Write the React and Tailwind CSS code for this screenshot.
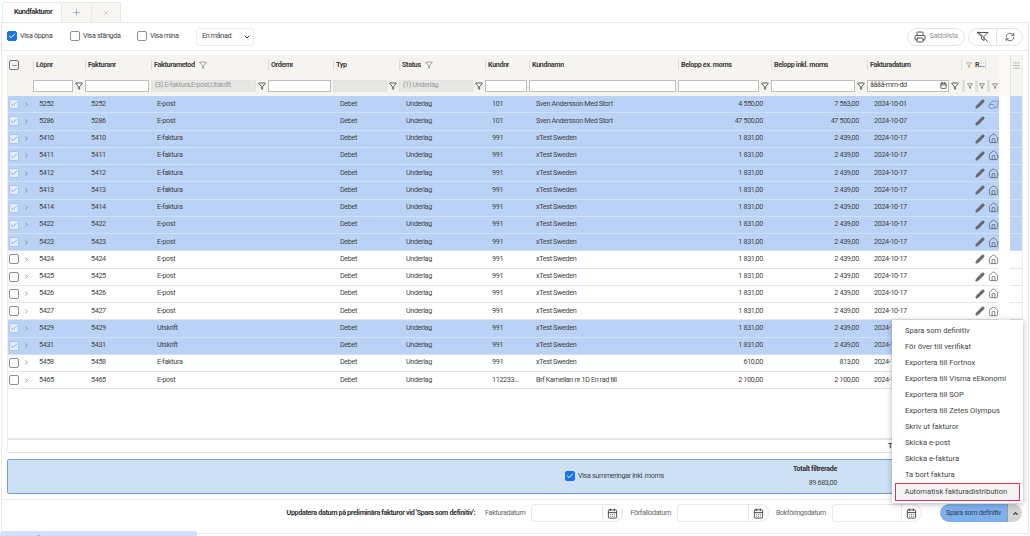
import React from "react";
import { Check, ChevronDown, ChevronRight, ChevronUp, Calendar, CalendarDays, Filter, House, Menu, Minus, Pencil, Plus, Printer, RefreshCw, X } from "lucide-react";

const E = "E-post";
const F = "E-faktura";
const U = "Utskrift";
const sven = "Sven Andersson Med Stort";
const xt = "xTest Sweden";

const rows = [
  [5252, E, "101", sven, "4 550,00", "7 563,00", "2024-10-01", 1, "leaf"],
  [5286, E, "101", sven, "47 500,00", "47 500,00", "2024-10-07", 1, ""],
  [5410, F, "991", xt, "1 831,00", "2 439,00", "2024-10-17", 1, "home"],
  [5411, F, "991", xt, "1 831,00", "2 439,00", "2024-10-17", 1, "home"],
  [5412, F, "991", xt, "1 831,00", "2 439,00", "2024-10-17", 1, "home"],
  [5413, F, "991", xt, "1 831,00", "2 439,00", "2024-10-17", 1, "home"],
  [5414, F, "991", xt, "1 831,00", "2 439,00", "2024-10-17", 1, "home"],
  [5422, E, "991", xt, "1 831,00", "2 439,00", "2024-10-17", 1, "home"],
  [5423, E, "991", xt, "1 831,00", "2 439,00", "2024-10-17", 1, "home"],
  [5424, E, "991", xt, "1 831,00", "2 439,00", "2024-10-17", 0, "home"],
  [5425, E, "991", xt, "1 831,00", "2 439,00", "2024-10-17", 0, "home"],
  [5426, E, "991", xt, "1 831,00", "2 439,00", "2024-10-17", 0, "home"],
  [5427, E, "991", xt, "1 831,00", "2 439,00", "2024-10-17", 0, "home"],
  [5429, U, "991", xt, "1 831,00", "2 439,00", "2024-10-17", 1, "home"],
  [5431, U, "991", xt, "1 831,00", "2 439,00", "2024-10-17", 1, "home"],
  [5458, F, "991", xt, "610,00", "813,00", "2024-10-17", 0, "home"],
  [5465, E, "112233...", "Brf Kamelian nr 1D En rad till", "2 100,00", "2 100,00", "2024-10-17", 0, "home"],
];

const menuItems = [
  "Spara som definitiv",
  "För över till verifikat",
  "Exportera till Fortnox",
  "Exportera till Visma eEkonomi",
  "Exportera till SOP",
  "Exportera till Zetes Olympus",
  "Skriv ut fakturor",
  "Skicka e-post",
  "Skicka e-faktura",
  "Ta bort faktura",
];

const cols = "grid grid-cols-[12px_13px_52px_66px_117px_65px_66px_86px_44px_149px_93px_96px_94px_38px]";

const Box = ({ checked, blue }) => (
  <span
    className={`flex h-[10px] w-[10px] shrink-0 items-center justify-center rounded-[2px] border ${
      blue ? "border-[#1a73e8] bg-[#1a73e8]" : checked ? "border-[#a9c4ec] bg-[#e4eefc]" : "border-[#8f8f8f] bg-white"
    }`}
  >
    {checked || blue ? <Check size={8} strokeWidth={3} className={blue ? "text-white" : "text-[#7fa9e8]"} /> : null}
  </span>
);

const HeadCell = ({ label, filter }) => (
  <div className="flex items-center gap-1 overflow-hidden border-l border-[#dcdad4] pl-[2px] font-bold text-[#3d3d3d]">
    <span className="truncate">{label}</span>
    {filter ? <Filter size={8} className="shrink-0 text-[#777]" /> : null}
  </div>
);

const FilterInput = ({ value, icon, disabled }) => (
  <div className="flex items-center gap-[2px] pr-[2px]">
    <div
      className={`flex h-[12px] min-w-0 flex-1 items-center truncate border px-[3px] ${
        disabled ? "border-[#e2e2e0] bg-[#e6e6e4] text-[#999]" : "border-[#bdbdbd] bg-white text-[#444]"
      }`}
    >
      {value}
    </div>
    {icon ? <Filter size={8} strokeWidth={2.5} className="shrink-0 text-[#444]" /> : null}
  </div>
);

const DateField = ({ label, width }) => (
  <div className="flex items-center gap-[6px]">
    <span className="text-[#666]">{label}</span>
    <div className={`flex h-[18px] items-center justify-end rounded-l-[3px] rounded-r-[9px] border border-[#e8e8e8] bg-white ${width}`}>
      <span className="flex h-full w-[20px] items-center justify-center border-l border-[#e8e8e8]">
        <CalendarDays size={11} className="text-[#444]" />
      </span>
    </div>
  </div>
);

export default function App() {
  return (
    <div className="relative h-[536px] w-[1030px] overflow-hidden bg-white font-['Roboto',sans-serif] text-[7.2px] tracking-[-0.35px] text-[#444]">
      {/* flikar */}
      <div className="flex h-[22px] items-end pl-[2px]">
        <div className="flex h-[20px] w-[60px] items-center rounded-t-[3px] border border-b-0 border-[#e8e8e8] bg-white pl-[11px] font-bold text-[#333]">
          Kundfakturor
        </div>
        <div className="flex h-[20px] w-[29px] items-center justify-center border-t border-[#e8e8e8] bg-[#f7f6f3]">
          <Plus size={9} className="text-[#6d9ad8]" />
        </div>
        <div className="flex h-[20px] w-[30px] items-center justify-center border border-b-0 border-[#e8e8e8] bg-[#f7f6f3]">
          <X size={8} className="text-[#bbb]" />
        </div>
      </div>

      <div className="mx-px flex h-[512px] flex-col border border-[#e8e8e8]">
        {/* verktygsrad */}
        <div className="flex h-[28px] shrink-0 items-center border-b border-[#eeeeee] pl-[5px] pr-[5px]">
          <div className="flex w-[63px] items-center gap-[3px]">
            <Box blue />
            <span>Visa öppna</span>
          </div>
          <div className="flex w-[67px] items-center gap-[3px]">
            <Box />
            <span>Visa stängda</span>
          </div>
          <div className="flex w-[59px] items-center gap-[3px]">
            <Box />
            <span>Visa mina</span>
          </div>
          <div className="flex h-[18px] w-[58px] items-center justify-between rounded-[3px] border border-[#eeeeee] pl-[5px] pr-[2px]">
            <span>En månad</span>
            <ChevronDown size={8} strokeWidth={3} className="text-[#333]" />
          </div>
          <div className="ml-auto flex h-[18px] w-[58px] items-center justify-center gap-[3px] rounded-full border border-[#e5e5e5] text-[#999]">
            <Printer size={12} className="text-[#555]" />
            <span>Saldolista</span>
          </div>
          <div className="ml-[3px] flex h-[18px] items-center rounded-full border border-[#e5e5e5]">
            <span className="flex h-full w-[28px] items-center justify-center border-r border-[#e5e5e5]">
              <svg width="13" height="11" viewBox="0 0 13 11" fill="none" stroke="#555" strokeWidth="1">
                <path d="M1 1.5h11L8 5.5v4L5.5 8V5.5z" />
                <path d="M2 0.5l9.5 10" />
              </svg>
            </span>
            <span className="flex h-full w-[25px] items-center justify-center">
              <RefreshCw size={10} className="text-[#555]" />
            </span>
          </div>
        </div>

        {/* tabell */}
        <div className="mx-[5px] mt-[4px] flex h-[398px] shrink-0 flex-col border-x border-[#eeeeee]">
          <div className="flex h-[41px] shrink-0 bg-[#f6f4f0]">
            <div className="w-[991px]">
              <div className={`${cols} h-[20px] items-center`}>
                <div className="flex justify-center">
                  <span className="flex h-[10px] w-[10px] items-center justify-center rounded-[2px] border border-[#777] bg-[#f6f4f0]">
                    <Minus size={7} className="text-[#555]" />
                  </span>
                </div>
                <div />
                <HeadCell label="Löpnr" />
                <HeadCell label="Fakturanr" />
                <HeadCell label="Fakturametod" filter />
                <HeadCell label="Ordernr" />
                <HeadCell label="Typ" />
                <HeadCell label="Status" filter />
                <HeadCell label="Kundnr" />
                <HeadCell label="Kundnamn" />
                <HeadCell label="Belopp ex. moms" />
                <HeadCell label="Belopp inkl. moms" />
                <HeadCell label="Fakturadatum" />
                <div className="flex items-center gap-[3px] border-l border-[#dcdad4] pl-[4px] font-bold">
                  <Filter size={6} className="text-[#777]" />
                  <span className="w-[11px] border-r border-[#dcdad4]">R...</span>
                </div>
              </div>
              <div className={`${cols} h-[21px] items-center`}>
                <div />
                <div />
                <FilterInput icon />
                <FilterInput />
                <FilterInput value="(3) E-faktura,E-post,Utskrift" icon disabled />
                <FilterInput />
                <FilterInput icon disabled />
                <FilterInput value="(1) Underlag" icon disabled />
                <FilterInput />
                <FilterInput />
                <FilterInput icon />
                <FilterInput icon />
                <div className="flex items-center gap-[2px] pr-[2px]">
                  <div className="flex h-[12px] min-w-0 flex-1 items-center justify-between border border-[#bdbdbd] bg-white pl-[2px] pr-[1px] text-[#444]">
                    <span>åååå-mm-dd</span>
                    <Calendar size={7} strokeWidth={2.5} className="text-[#333]" />
                  </div>
                  <Filter size={8} strokeWidth={2.5} className="shrink-0 text-[#444]" />
                </div>
                <div className="flex items-center justify-around text-[#555]">
                  <span className="h-[12px] w-[3px] bg-[#e0e0de]" />
                  <Filter size={6} strokeWidth={2.5} />
                  <span className="h-[12px] w-[3px] bg-[#e0e0de]" />
                  <Filter size={6} strokeWidth={2.5} />
                  <span className="h-[12px] w-[3px] bg-[#e0e0de]" />
                  <Filter size={6} strokeWidth={2.5} />
                </div>
              </div>
            </div>
            <div className="w-[11px] shrink-0 bg-[#f9f8f5]" />
            <div className="flex flex-1 items-start justify-center border-l border-[#e4e4e4] pt-[6px]">
              <Menu size={9} className="text-[#aaa]" />
            </div>
          </div>

          <div className="flex min-h-0 flex-1 flex-col">
            {rows.map((r) => (
              <div key={r[0]} className="flex h-[17.25px] shrink-0">
                <div className={`${cols} w-[991px] items-center border-b ${r[7] ? "border-[#d0e0f8] bg-[#b9d2f6]" : "border-[#e6e6e6] bg-white"}`}>
                  <div className="flex justify-center">
                    <Box checked={!!r[7]} />
                  </div>
                  <div className="flex justify-center">
                    <ChevronRight size={7} className="text-[#666]" />
                  </div>
                  <div className="pl-[6px]">{r[0]}</div>
                  <div className="pl-[6px]">{r[0]}</div>
                  <div className="pl-[6px]">{r[1]}</div>
                  <div />
                  <div className="pl-[7px]">Debet</div>
                  <div className="pl-[7px]">Underlag</div>
                  <div className="pl-[7px]">{r[2]}</div>
                  <div className="pl-[7px]">{r[3]}</div>
                  <div className="pr-[8px] text-right">{r[4]}</div>
                  <div className="pr-[8px] text-right">{r[5]}</div>
                  <div className="pl-[7px]">{r[6]}</div>
                  <div className="flex items-center justify-end gap-[3px]">
                    <Pencil size={10} fill="#666" className="text-[#666]" />
                    {r[8] === "home" ? <House size={11} strokeWidth={1.5} className="text-[#555]" /> : null}
                    {r[8] === "leaf" ? (
                      <svg width="11" height="11" viewBox="0 0 11 11" fill="none" stroke="#6f86a8" strokeWidth="0.8">
                        <path d="M1 5.5 5 2h5.5L9 8.5 3 9.5 1 8zM1 5.5h4.5L7 8.5" />
                      </svg>
                    ) : null}
                    {r[8] === "" ? <span className="w-[11px]" /> : null}
                  </div>
                </div>
                <div className="w-[11px] shrink-0 bg-white" />
                <div className={`flex-1 border-b ${r[7] ? "border-[#d0e0f8] bg-[#b9d2f6]" : "border-[#e6e6e6] bg-white"}`} />
              </div>
            ))}
          </div>

          <div className="flex h-[15px] shrink-0 items-center justify-end border-y border-t-[2px] border-y-[#e4e4e4] pr-[130px] font-bold">
            T
          </div>
        </div>

        {/* summering */}
        <div className="mx-[5px] mt-[6px] flex h-[35px] shrink-0 items-center rounded-[2px] border border-[#6f9fe0] bg-[#cde0f6]">
          <div className="ml-[557px] flex w-[272px] items-center justify-between">
            <div className="flex items-center gap-[3px]">
              <Box blue />
              <span>Visa summeringar inkl. moms</span>
            </div>
            <div className="flex flex-col items-end gap-[3px]">
              <span className="font-bold text-[#333]">Totalt filtrerade</span>
              <span>89 683,00</span>
            </div>
          </div>
        </div>

        {/* datumrad */}
        <div className="mt-[5px] flex h-[27px] shrink-0 items-center justify-end gap-[7px] border-t border-[#eeeeee] pr-[6px]">
          <span className="mr-[3px] font-bold text-[#333]">Uppdatera datum på preliminära fakturor vid 'Spara som definitiv':</span>
          <DateField label="Fakturadatum" width="w-[92px]" />
          <DateField label="Förfallodatum" width="w-[92px]" />
          <DateField label="Bokföringsdatum" width="w-[90px]" />
          <div className="ml-[11px] flex h-[18px] items-center overflow-hidden rounded-full">
            <span className="flex h-full w-[67px] items-center justify-center whitespace-nowrap bg-[#7fb0ee] text-[#2f3f55]">Spara som definitiv</span>
            <span className="flex h-full w-[15px] items-center justify-center border-l border-[#9a9a9a] bg-[#d4d4d4]">
              <ChevronUp size={7} strokeWidth={4} className="text-[#333]" />
            </span>
          </div>
        </div>
      </div>

      {/* flik längst ner, klipps av bildkanten */}
      <div className="absolute left-0 top-[531px] h-[5px] w-[197px] overflow-hidden whitespace-nowrap rounded-t-[3px] bg-[#cfe0f7] pl-[12px] pt-[3px] text-[#556]">
        Senaste fakturadistribution kördes 2024-10-17 kl 08:21
      </div>

      {/* meny */}
      <div className="absolute left-[892px] top-[320px] w-[131px] bg-white pb-[2px] pl-[3px] pr-[3px] pt-[3px] text-[7.6px] tracking-normal text-[#444] shadow-[0_1px_6px_rgba(0,0,0,0.3)]">
        {menuItems.map((item) => (
          <div key={item} className="flex h-[16px] items-center pl-[10px]">
            {item}
          </div>
        ))}
        <div className="flex h-[18px] items-center border-[1.5px] border-[#e0344a] bg-[#f3f3f3] pl-[8.5px]">
          Automatisk fakturadistribution
        </div>
      </div>
    </div>
  );
}
